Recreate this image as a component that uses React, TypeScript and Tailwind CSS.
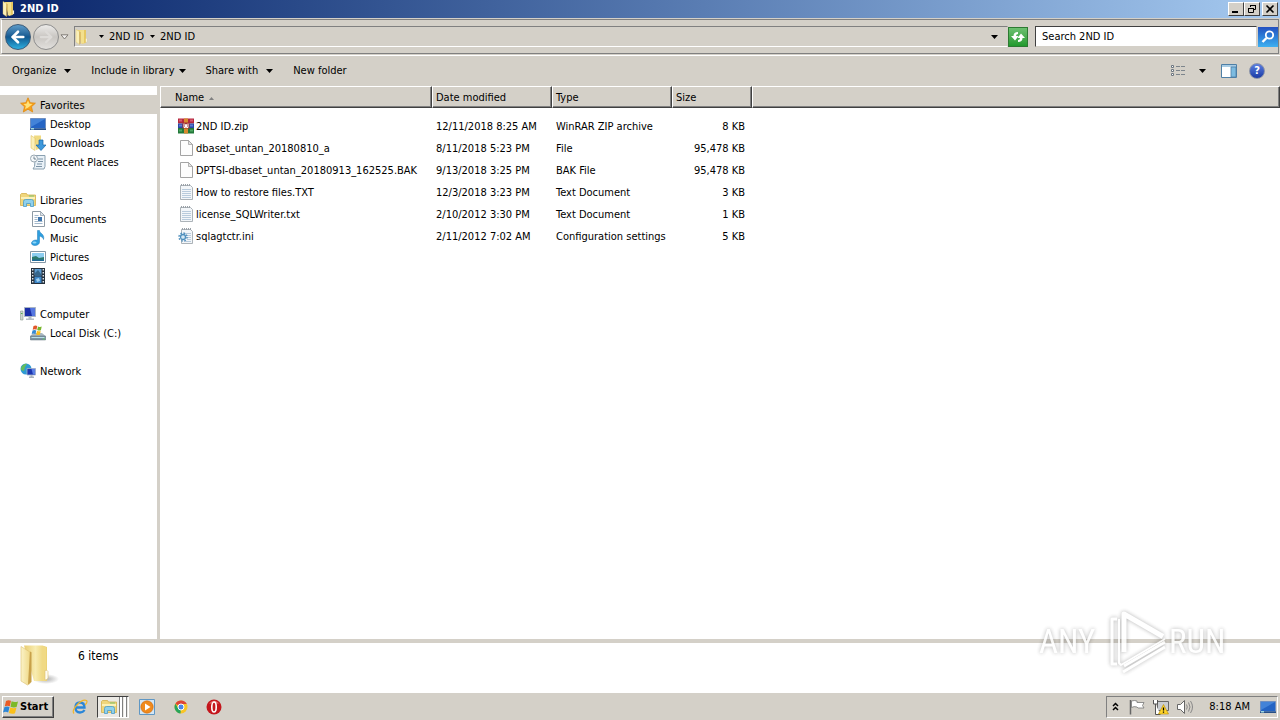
import type { ReactNode } from 'react';
import { ArrowLeft, ArrowRight } from 'lucide-react';

type IconProps = { className?: string };

/* ---------- icons ---------- */

function FolderIcon({ className = 'size-4' }: IconProps) {
  return (
    <svg viewBox="0 0 16 16" className={className} aria-hidden="true">
      <path d="M2.500 1h8v13L7 15z" fill="#efd677" />
      <path d="M5 1.500l6-.8v12.600l-5 1.200z" fill="#f3e08e" />
      <path d="M9 1h2v12.500l-2 .5z" fill="#e6c862" />
      <path d="M1 .5l3.500 2V15.500L1 13z" fill="#fbf0b8" stroke="#dfc268" strokeWidth="0.4" />
      <path d="M4.500 2.500l1 .6v11.500l-1 .9z" fill="#c9a24a" />
      <path d="M10.800 9.500h1.200v3.500h-1.200z" fill="#fffdf0" stroke="#dcc06a" strokeWidth="0.2" />
    </svg>
  );
}

function LargeFolderIcon() {
  return (
    <svg viewBox="0 0 40 44" className="h-11 w-10" aria-hidden="true">
      <defs>
        <linearGradient id="folder-back" x1="0" x2="1">
          <stop offset="0" stopColor="#e9cd72" />
          <stop offset="0.5" stopColor="#f8ecb0" />
          <stop offset="1" stopColor="#e8cb66" />
        </linearGradient>
        <linearGradient id="folder-front" x1="0" x2="1">
          <stop offset="0" stopColor="#fbf3c8" />
          <stop offset="1" stopColor="#efd988" />
        </linearGradient>
        <radialGradient id="folder-shadow">
          <stop offset="0" stopColor="#8c8c8c" stopOpacity="0.7" />
          <stop offset="1" stopColor="#8c8c8c" stopOpacity="0" />
        </radialGradient>
      </defs>
      <ellipse cx="26" cy="36" rx="13" ry="5" fill="url(#folder-shadow)" />
      <path d="M4 2.500h18.500l4.500 1.500V38H14z" fill="url(#folder-back)" />
      <path d="M22 3l4.500 1.200V38H22z" fill="#f0d984" />
      <path d="M1 3.500L10 9v31.500L7.500 42 1 38z" fill="url(#folder-front)" stroke="#dcc070" strokeWidth="0.6" />
      <path d="M10 8.500l1.500.8V39L8 41.500z" fill="#c8a14a" />
      <path d="M25 27.500q2.500-1 3 1V35q-.5 2-3 2z" fill="#fffdf2" stroke="#dcc070" strokeWidth="0.6" />
    </svg>
  );
}

function StarIcon() {
  return (
    <svg viewBox="0 0 16 16" className="size-4" aria-hidden="true">
      <path d="M8 .8l2.200 4.900 5.200.5-3.900 3.500 1.200 5.300L8 12.200 3.300 15l1.200-5.300L.6 6.200l5.200-.5z" fill="#f9a11b" stroke="#e08a10" strokeWidth="0.8" />
      <path d="M8 3.500l1.400 3.300 3 .3-2.300 2L8 10.800 5 12l.9-3L3.500 7l3-.3z" fill="#ffe27a" />
    </svg>
  );
}

function DesktopIcon() {
  return (
    <svg viewBox="0 0 16 16" className="size-4" aria-hidden="true">
      <path d="M.5 2.500h15v10H.5z" fill="#2464c4" stroke="#6f8fc0" />
      <path d="M1 3h14L1 11z" fill="#4383d8" />
      <path d="M0 12.500h16v1.500H0z" fill="#274f86" />
      <path d="M1 12h3v1.500H1z" fill="#9fd8e0" />
    </svg>
  );
}

function DownloadsIcon() {
  return (
    <svg viewBox="0 0 16 16" className="size-4" aria-hidden="true">
      <path d="M4 .5h7v12.500l-5 2z" fill="#f0da80" />
      <path d="M1 .5L5 3V15.500L1 13z" fill="#fbf0b8" stroke="#d8b650" strokeWidth="0.5" />
      <path d="M9 5h4v5h3l-5 5.500L6 10h3z" fill="#3d98dc" stroke="#1764a8" strokeWidth="0.7" />
    </svg>
  );
}

function RecentIcon() {
  return (
    <svg viewBox="0 0 16 16" className="size-4" aria-hidden="true">
      <path d="M5.500 1.500h9.500v11l-1 2.500H3l1.500-2.500z" fill="#e9f1f7" stroke="#8aa0b0" />
      <path d="M8 5h5M8 7.500h5M7 10h5M6 12.500h6" stroke="#7c93a6" />
      <circle cx="4" cy="4.500" r="3.500" fill="#f5f8fa" stroke="#9aa8b2" />
      <path d="M4 2.500v2.500h2" stroke="#52677a" strokeWidth="0.8" fill="none" />
    </svg>
  );
}

function LibraryIcon({ className = 'size-4' }: IconProps) {
  return (
    <svg viewBox="0 0 16 16" className={className} aria-hidden="true">
      <path d="M.5 13.500V2.500L1.500 1.500h5l1 1.500h8v10.500z" fill="#f0d67c" stroke="#d3b04c" strokeWidth="0.8" />
      <path d="M1 5h14v2H1z" fill="#fbf0b8" />
      <path d="M9 3.500h5v1H9z" fill="#7cc576" />
      <path d="M3.500 14.500V9.500q0-2 2-2h6q2 0 2 2v5h-3v-3h-4v3z" fill="#8fd0ec" stroke="#4a9cc8" strokeWidth="0.8" />
    </svg>
  );
}

function DocumentsIcon() {
  return (
    <svg viewBox="0 0 16 16" className="size-4" aria-hidden="true">
      <path d="M2.500.5h8l4 4v11h-12z" fill="#fff" stroke="#8e9aa5" />
      <path d="M10.500.5v4h4z" fill="#dbe3ea" stroke="#8e9aa5" strokeWidth="0.7" />
      <path d="M4.500 4.500h4M4.500 6.500h3M4.500 8.500h3M4.500 10.500h8M4.500 12.500h8" stroke="#8ca6bf" strokeWidth="0.8" />
      <path d="M8 6h4v4H8z" fill="#3d74ad" />
    </svg>
  );
}

function MusicIcon() {
  return (
    <svg viewBox="0 0 16 16" className="size-4" aria-hidden="true">
      <path d="M7.500.5h2c0 3 5.500 3.500 4 9-.4-2-2-3-4-3.500V12c0 2-2 3.500-4.500 3.500S1.500 14.500 1.500 13s2-3 4.500-3q1 0 1.500.3z" fill="#2e9fdf" stroke="#1c78b8" strokeWidth="0.5" />
      <ellipse cx="4.500" cy="12.500" rx="2" ry="1" fill="#8fd6f8" />
    </svg>
  );
}

function PicturesIcon() {
  return (
    <svg viewBox="0 0 16 16" className="size-4" aria-hidden="true">
      <path d="M.5 2.500h15v11H.5z" fill="#fff" stroke="#8497a6" />
      <path d="M2 4h12v8H2z" fill="#8ccdf0" />
      <path d="M2 8l4-1 3 2 5-1v4H2z" fill="#2b7a6e" />
      <path d="M2 10.500h12V12H2z" fill="#1e6a98" />
    </svg>
  );
}

function VideosIcon() {
  return (
    <svg viewBox="0 0 16 16" className="size-4" aria-hidden="true">
      <path d="M1 0h14v16H1z" fill="#25303c" />
      <path d="M4.500 1h7v6.500h-7z" fill="#5b9bd0" />
      <path d="M4.500 8.500h7V15h-7z" fill="#3c86c8" />
      <path d="M5 5l3-3 3 4v1.500H5z" fill="#35668c" />
      <path d="M6 11l3-1 1 3-3 1z" fill="#9fd0f0" />
      <path d="M2.700 1v15M13.300 1v15" stroke="#dfe6ec" strokeWidth="1.400" strokeDasharray="1.500 1.500" />
    </svg>
  );
}

function ComputerIcon() {
  return (
    <svg viewBox="0 0 16 16" className="size-4" aria-hidden="true">
      <path d="M.5 5h2.500v9H.5z" fill="#cdd6cf" stroke="#8d9a90" strokeWidth="0.6" />
      <path d="M4.500 1.500h11v9h-11z" fill="#1c2fa8" stroke="#a8b4c4" />
      <path d="M10 2h5v8l-3 0z" fill="#5577e0" />
      <path d="M8.500 11h3v1.500H14V14H6v-1.500h2.500z" fill="#b5bec6" />
      <path d="M1 7.500h1.500" stroke="#4fae4f" />
    </svg>
  );
}

function WindowsFlag({ className = 'size-4' }: IconProps) {
  return (
    <svg viewBox="0 0 16 16" className={className} aria-hidden="true">
      <path d="M3 2Q5.500.5 8 1.800L6.800 7.300Q4.500 6 1.800 7.300z" fill="#ea5b25" />
      <path d="M8.600 2.200q2.900 1.400 6.400.2L13.600 8q-3 1-6.100-.3z" fill="#7db928" />
      <path d="M1.500 8.100q2.600-1.200 5 0l-1.300 5.400Q2.800 12.200 0 13.500z" fill="#2c86d6" />
      <path d="M7.300 8.500q2.900 1.300 6.100.3l-1.400 5.500q-3 1.200-6.100-.3z" fill="#fbc01a" />
    </svg>
  );
}

function LocalDiskIcon() {
  return (
    <svg viewBox="0 0 16 16" className="size-4" aria-hidden="true">
      <path d="M1 10l3-2h8l3.500 3v4H.5v-4z" fill="#a9b8c2" />
      <path d="M.5 11h15v4H.5z" fill="#7b93a2" stroke="#60737f" strokeWidth="0.5" />
      <path d="M1.500 12h13v1h-13z" fill="#b9dfe8" />
      <path d="M3.500 1Q5.500 0 7.300 1L6.500 4.700Q4.700 4 2.700 4.800z" fill="#e2572a" />
      <path d="M8 1.400q1.800.9 3.700.2L10.900 5.300Q9 6 7.200 5.100z" fill="#78b62c" />
      <path d="M2.500 5.400q2-.9 3.800 0L5.500 9Q3.700 8.200 1.700 9z" fill="#3489d4" />
      <path d="M7 5.800q1.900.9 3.700.2L9.900 9.700Q8 10.400 6.200 9.500z" fill="#f9bd1f" />
      <path d="M13 13.500h1.500v1H13z" fill="#56d656" />
    </svg>
  );
}

function NetworkIcon() {
  return (
    <svg viewBox="0 0 16 16" className="size-4" aria-hidden="true">
      <circle cx="6" cy="6" r="5.500" fill="#2e9ad4" />
      <path d="M2 3q3-3 5-2L5 4 4 8 1 7q-.5-2 1-4zM7 6l3-1 1 3-3 3z" fill="#63bd5d" />
      <path d="M7 5.500h8.500v6.500H7z" fill="#1b35b0" stroke="#a5b4cc" strokeWidth="0.8" />
      <path d="M11.500 6H15v5.500h-2z" fill="#5b80e6" />
      <path d="M10.500 12.300h2v1.200h1.500v1.500H9v-1.500h1.500z" fill="#aab3bc" />
    </svg>
  );
}

function ZipIcon() {
  return (
    <svg viewBox="0 0 16 16" className="size-4" aria-hidden="true">
      <path d="M0 .5h16v5H0z" fill="#b5263c" />
      <path d="M0 5.500h16V10H0z" fill="#2747a5" />
      <path d="M0 10h16v5.500H0z" fill="#23793a" />
      <path d="M1 1.500h3v2H1zM12 1.500h3v2h-3z" fill="#d85a72" />
      <path d="M1 6.500h3v2H1zM12 6.500h3v2h-3z" fill="#5c7bd0" />
      <path d="M1 11.500h3v2H1zM12 11.500h3v2h-3z" fill="#4fa862" />
      <path d="M6 .5h4v15H6z" fill="#d88a2e" />
      <path d="M4.500 4.500h7v6h-7z" fill="#a03030" />
      <path d="M6 5.500v4h1.500V6.500h1v3H10v-4" stroke="#fff" fill="none" />
    </svg>
  );
}

function FileIcon() {
  return (
    <svg viewBox="0 0 16 16" className="size-4" aria-hidden="true">
      <path d="M2.500.5h8l4 4v11h-12z" fill="#fdfdfd" stroke="#9a9a9a" strokeWidth="0.9" />
      <path d="M10.500.5v4h4z" fill="#e4e4e4" stroke="#9a9a9a" strokeWidth="0.7" />
    </svg>
  );
}

function TextIcon() {
  return (
    <svg viewBox="0 0 16 16" className="size-4" aria-hidden="true">
      <path d="M2.500 1.500h10l2 2v12h-12z" fill="#f3f6f9" stroke="#a3aab0" strokeWidth="0.9" />
      <path d="M4 5.500h9M4 7.500h9M4 9.500h9M4 11.500h9M4 13.500h9" stroke="#a9c0d4" strokeWidth="0.8" />
      <path d="M3 1h10" stroke="#9aa1a8" strokeWidth="2" strokeDasharray="1 1" />
    </svg>
  );
}

function ConfigIcon() {
  return (
    <svg viewBox="0 0 16 16" className="size-4" aria-hidden="true">
      <path d="M3.500 1.500h9l2 2v12h-11z" fill="#f3f6f9" stroke="#a3aab0" strokeWidth="0.9" />
      <path d="M6 5.500h7M9 7.500h4M9 9.500h4M9 11.500h4M6 13.500h7" stroke="#a9c0d4" strokeWidth="0.8" />
      <path d="M4 1h9" stroke="#9aa1a8" strokeWidth="2" strokeDasharray="1 1" />
      <circle cx="5" cy="9" r="4" fill="none" stroke="#4f8fbd" strokeWidth="1.400" strokeDasharray="1.600 1.540" />
      <circle cx="5" cy="9" r="2.500" fill="#d6e9f5" stroke="#4f8fbd" strokeWidth="1.300" />
    </svg>
  );
}

function Caret({ className = 'w-[7px] h-1' }: IconProps) {
  return (
    <svg viewBox="0 0 7 4" className={className} aria-hidden="true">
      <path d="M0 0h7L3.500 4z" fill="currentColor" />
    </svg>
  );
}

/* ---------- data ---------- */

type NavItem = { label: string; icon: ReactNode };
type NavGroup = NavItem & { active?: boolean; items: NavItem[] };

const navGroups: NavGroup[] = [
  {
    label: 'Favorites',
    icon: <StarIcon />,
    active: true,
    items: [
      { label: 'Desktop', icon: <DesktopIcon /> },
      { label: 'Downloads', icon: <DownloadsIcon /> },
      { label: 'Recent Places', icon: <RecentIcon /> },
    ],
  },
  {
    label: 'Libraries',
    icon: <LibraryIcon />,
    items: [
      { label: 'Documents', icon: <DocumentsIcon /> },
      { label: 'Music', icon: <MusicIcon /> },
      { label: 'Pictures', icon: <PicturesIcon /> },
      { label: 'Videos', icon: <VideosIcon /> },
    ],
  },
  {
    label: 'Computer',
    icon: <ComputerIcon />,
    items: [{ label: 'Local Disk (C:)', icon: <LocalDiskIcon /> }],
  },
  { label: 'Network', icon: <NetworkIcon />, items: [] },
];

const files = [
  { name: '2ND ID.zip', date: '12/11/2018 8:25 AM', type: 'WinRAR ZIP archive', size: '8 KB', icon: <ZipIcon /> },
  { name: 'dbaset_untan_20180810_a', date: '8/11/2018 5:23 PM', type: 'File', size: '95,478 KB', icon: <FileIcon /> },
  { name: 'DPTSI-dbaset_untan_20180913_162525.BAK', date: '9/13/2018 3:25 PM', type: 'BAK File', size: '95,478 KB', icon: <FileIcon /> },
  { name: 'How to restore files.TXT', date: '12/3/2018 3:23 PM', type: 'Text Document', size: '3 KB', icon: <TextIcon /> },
  { name: 'license_SQLWriter.txt', date: '2/10/2012 3:30 PM', type: 'Text Document', size: '1 KB', icon: <TextIcon /> },
  { name: 'sqlagtctr.ini', date: '2/11/2012 7:02 AM', type: 'Configuration settings', size: '5 KB', icon: <ConfigIcon /> },
];

/* ---------- window parts ---------- */

function TitleButton({ label, children }: { label: string; children: ReactNode }) {
  return (
    <button
      type="button"
      aria-label={label}
      className="flex h-[14px] w-4 items-center justify-center border border-t-white border-l-white border-r-[#404040] border-b-[#404040] bg-[#d4d0c8]"
    >
      <svg viewBox="0 0 10 10" className="size-[10px]" fill="none" stroke="#000">
        {children}
      </svg>
    </button>
  );
}

function TitleBar() {
  return (
    <header className="flex h-[18px] items-center bg-linear-to-r from-[#0a246a] to-[#a6caf0] pr-[2px] pl-[2px]">
      <FolderIcon />
      <h1 className="ml-[2px] flex-1 font-bold text-white">2ND ID</h1>
      <TitleButton label="Minimize">
        <path d="M1 8h6" strokeWidth="2" />
      </TitleButton>
      <TitleButton label="Restore">
        <path d="M3.500 3V1.500h5v4H7M3 1.500h6M1.500 4.500h5v4h-5zM1 4.500h6" />
      </TitleButton>
      <span className="w-[2px]" />
      <TitleButton label="Close">
        <path d="M1.500 1.500l7 7M8.500 1.500l-7 7" strokeWidth="1.600" />
      </TitleButton>
    </header>
  );
}

function AddressBar() {
  return (
    <div className="m-px flex h-[35px] items-center border border-[#808080] border-l-white pl-[3px]">
      <button type="button" aria-label="Back" className="flex size-[26px] items-center justify-center rounded-full border border-[#3b5a78] bg-linear-to-b from-[#5d9cc9] via-[#12588f] to-[#2fb0e0] text-white">
        <ArrowLeft size={18} strokeWidth={3.5} />
      </button>
      <button type="button" aria-label="Forward" className="ml-[2px] flex size-[26px] items-center justify-center rounded-full border border-[#8d8d8d] bg-linear-to-b from-[#ecebe9] via-[#c9c6c2] to-[#e2e0dd] text-[#dddbd8]">
        <ArrowRight size={18} strokeWidth={3} />
      </button>
      <button type="button" aria-label="Recent locations" className="ml-px">
        <svg viewBox="0 0 9 6" className="h-[6px] w-[9px]">
          <path d="M1 .8h7L4.500 5z" fill="#f2f0ee" stroke="#77736c" strokeWidth="0.9" />
        </svg>
      </button>
      <nav aria-label="Address" className="ml-[5px] flex h-[21px] flex-1 items-center border border-t-[#808080] border-l-[#808080] border-r-[#d4d0c8] border-b-white">
        <FolderIcon />
        <Caret className="ml-2 h-[3px] w-[5px]" />
        <a href="#parent" className="ml-[5px]">2ND ID</a>
        <Caret className="ml-[6px] h-[3px] w-[5px]" />
        <a href="#current" className="ml-[5px]">2ND ID</a>
        <button type="button" aria-label="Previous locations" className="mr-[9px] ml-auto">
          <Caret />
        </button>
      </nav>
      <button type="button" aria-label="Refresh" className="mr-[2px] flex size-5 items-center justify-center border border-[#2d7a32] bg-linear-to-b from-[#6cc070] to-[#1f9a2c]">
        <svg viewBox="0 0 18 18" className="size-[18px]">
          <path d="M9 4Q4.500 4 4.500 8H2l4 4.500L9.500 8H7q0-2 2-2z" fill="#fff" />
          <path d="M9 14q4.500 0 4.500-4H16l-4-4.500L8.500 10H11q0 2-2 2z" fill="#fff" />
        </svg>
      </button>
      <input
        type="text"
        aria-label="Search 2ND ID"
        placeholder="Search 2ND ID"
        className="ml-[5px] h-[21px] w-[222px] border border-t-[#404040] border-l-[#404040] border-r-[#d4d0c8] border-b-[#d4d0c8] bg-white px-[6px] placeholder:text-black placeholder:opacity-100"
      />
      <button type="button" aria-label="Search" className="ml-px flex size-5 items-center justify-center bg-linear-to-b from-[#2450c0] to-[#3fb0f0]">
        <svg viewBox="0 0 16 16" className="size-4" fill="none" stroke="#fff">
          <circle cx="9.500" cy="6" r="3.700" strokeWidth="1.800" />
          <path d="M6.500 9l-4 4" strokeWidth="2.400" />
        </svg>
      </button>
    </div>
  );
}

function Toolbar() {
  return (
    <div className="flex h-[31px] items-center border-t border-white pr-[15px] pb-px pl-3">
      <button type="button" className="flex items-center gap-2">
        Organize <Caret />
      </button>
      <button type="button" className="ml-5 flex items-center gap-1">
        Include in library <Caret />
      </button>
      <button type="button" className="ml-5 flex items-center gap-2">
        Share with <Caret />
      </button>
      <button type="button" className="ml-5">New folder</button>
      <button type="button" aria-label="Change view" className="ml-auto">
        <svg viewBox="0 0 16 14" className="h-[14px] w-4" fill="none">
          <path d="M1.500 1.500h2v2h-2zM1.500 5.500h2v2h-2zM1.500 9.500h2v2h-2z" stroke="#6c7680" fill="#fff" />
          <path d="M6 2.500h4M11 2.500h4M6 6.500h4M11 6.500h4M6 10.500h4M11 10.500h4" stroke="#7d858c" />
        </svg>
      </button>
      <button type="button" aria-label="More view options" className="ml-[13px]">
        <Caret />
      </button>
      <button type="button" aria-label="Preview pane" className="ml-[15px]">
        <svg viewBox="0 0 16 14" className="h-[14px] w-4">
          <path d="M.5.5h15v13H.5z" fill="#fff" stroke="#4e7fa6" />
          <path d="M1 1h14v2H1z" fill="#a8cce4" />
          <path d="M10 3h5v10h-5z" fill="#7cbbe0" stroke="#4e7fa6" strokeWidth="0.8" />
        </svg>
      </button>
      <button type="button" aria-label="Help" className="ml-3 flex size-4 items-center justify-center rounded-full border border-[#8a93a8] bg-linear-to-b from-[#5c7ee0] to-[#1b3aa5] font-bold text-white">
        ?
      </button>
    </div>
  );
}

function Sidebar() {
  return (
    <nav aria-label="Folders" className="w-[160px] shrink-0 border-r-[3px] border-[#d4d0c8] bg-white pt-[9px]">
      {navGroups.map((group) => (
        <ul key={group.label} className="mb-[19px]">
          <li>
            <a
              href={`#${group.label}`}
              className={group.active ? 'flex h-[19px] items-center gap-1 bg-[#d4d0c8] pl-5' : 'flex h-[19px] items-center gap-1 pl-5'}
            >
              {group.icon}
              <span className="pt-[2px]">{group.label}</span>
            </a>
          </li>
          {group.items.map((item) => (
            <li key={item.label}>
              <a href={`#${item.label}`} className="flex h-[19px] items-center gap-1 pl-[30px]">
                {item.icon}
                <span className="pt-[2px]">{item.label}</span>
              </a>
            </li>
          ))}
        </ul>
      ))}
    </nav>
  );
}

const headCell =
  'h-[22px] border border-t-white border-l-white border-r-[#404040] border-b-[#404040] bg-[#d4d0c8] px-[3px] pt-[2px] pb-0 text-left font-normal shadow-[inset_-1px_-1px_0_#808080]';

function FileTable() {
  return (
    <main className="flex-1 bg-white">
      <table className="w-full table-fixed border-separate border-spacing-0">
        <colgroup>
          <col className="w-[272px]" />
          <col className="w-[120px]" />
          <col className="w-[120px]" />
          <col className="w-[80px]" />
          <col />
        </colgroup>
        <thead>
          <tr>
            <th scope="col" className={headCell}>
              <span className="flex items-center gap-[5px] pl-[11px]">
                Name
                <svg viewBox="0 0 5 3" className="h-[3px] w-[5px] text-[#808080]" aria-hidden="true">
                  <path d="M0 3h5L2.500 0z" fill="currentColor" />
                </svg>
              </span>
            </th>
            <th scope="col" className={headCell}>Date modified</th>
            <th scope="col" className={headCell}>Type</th>
            <th scope="col" className={headCell}>Size</th>
            <td className={headCell} />
          </tr>
        </thead>
        <tbody className="before:block before:h-[7px]">
          {files.map((file) => (
            <tr key={file.name} className="h-[22px] whitespace-nowrap">
              <td className="p-0">
                <span className="flex items-center gap-[2px] pl-[18px]">
                  {file.icon}
                  <span className="pt-[2px]">{file.name}</span>
                </span>
              </td>
              <td className="px-1 pt-[2px] pb-0">{file.date}</td>
              <td className="px-1 pt-[2px] pb-0">{file.type}</td>
              <td className="px-[7px] pt-[2px] pb-0 text-right">{file.size}</td>
              <td />
            </tr>
          ))}
        </tbody>
      </table>
    </main>
  );
}

function Watermark() {
  return (
    <svg
      viewBox="0 0 200 70"
      className="pointer-events-none absolute right-[44px] bottom-[44px] h-[70px] w-[200px] opacity-85 drop-shadow-[0_0_2px_rgba(0,0,0,0.35)]"
      aria-label="ANY RUN"
    >
      <g fill="#fff" fontFamily="'Liberation Sans Narrow', 'Roboto Condensed', 'Open Sans Condensed', Roboto, sans-serif" fontSize="33">
        <text x="3" y="47">ANY</text>
        <text x="133" y="47">RUN</text>
      </g>
      <g fill="none" stroke="#fff" strokeLinejoin="round">
        <path d="M88 46V8l39 22.500" strokeWidth="5" />
        <path d="M81 13h-5v45h5" strokeWidth="3" />
        <path d="M83 13v44l2 2 44-26" strokeWidth="2" />
        <path d="M87 66l42-25M88 60l41-24" strokeWidth="3" />
      </g>
    </svg>
  );
}

function DetailsPane() {
  return (
    <footer className="flex h-[53px] items-start border-t-4 border-[#d4d0c8] bg-white pl-5">
      <LargeFolderIcon />
      <p className="ml-[18px] pt-[5px] text-xs">6 items</p>
    </footer>
  );
}

function Taskbar() {
  return (
    <div className="flex h-[28px] items-center border-t border-white bg-[#d4d0c8] pr-[2px] pl-[2px]">
      <button type="button" className="flex h-[22px] w-[52px] items-center gap-px border border-t-white border-l-white border-r-[#404040] border-b-[#404040] font-bold shadow-[inset_-1px_-1px_0_#808080]">
        <WindowsFlag />
        Start
      </button>
      <button type="button" aria-label="Internet Explorer" className="ml-[18px]">
        <svg viewBox="0 0 16 16" className="size-4" fill="none">
          <path d="M12.500 11Q11 13.500 8 13.500q-4.500 0-4.500-5T8 3.500q4.500 0 4.500 5H4" stroke="#2a86d8" strokeWidth="2.300" />
          <path d="M2 14.500Q-.5 12 5 6T14.500 1.500Q16 3 13 6" stroke="#f0b528" strokeWidth="1.200" />
        </svg>
      </button>
      <button type="button" aria-label="Windows Explorer" className="ml-[9px] flex h-[22px] w-[32px] items-center border border-t-[#404040] border-l-[#404040] border-r-white border-b-white bg-[#ebe9e4] pl-[3px]">
        <LibraryIcon />
        <span className="ml-[2px] h-5 w-1 border-x border-[#808080] bg-white" />
        <span className="ml-px h-5 w-[3px] border-r border-[#808080] bg-white" />
      </button>
      <button type="button" aria-label="Media Player" className="ml-[10px]">
        <svg viewBox="0 0 16 16" className="size-4">
          <path d="M.5.5h15v15H.5z" fill="#d3e6f5" stroke="#5f97c4" />
          <circle cx="8" cy="8" r="6.200" fill="#f08a1d" stroke="#c9670c" strokeWidth="0.600" />
          <path d="M6 4.500v7L11.500 8z" fill="#fff" />
        </svg>
      </button>
      <button type="button" aria-label="Chrome" className="ml-[18px]">
        <svg viewBox="0 0 16 16" className="size-4">
          <circle cx="8" cy="8" r="6.500" fill="#f9c526" />
          <path d="M8 8L2.400 4.700A6.500 6.500 0 0 1 13.800 5H8z" fill="#dd4437" />
          <path d="M8 8l-.5 6.500A6.500 6.500 0 0 1 2.400 4.700L5.400 9.500z" fill="#27a45b" />
          <circle cx="8" cy="8" r="3" fill="#4a86e8" stroke="#fff" />
        </svg>
      </button>
      <button type="button" aria-label="Opera" className="ml-[17px]">
        <svg viewBox="0 0 16 16" className="size-4">
          <circle cx="8" cy="8" r="7.500" fill="#c4161c" />
          <path d="M3 4.500Q8-1 13 4.500z" fill="#e8696c" />
          <ellipse cx="8" cy="8" rx="2.200" ry="5" fill="#c4161c" stroke="#fff" strokeWidth="1.600" />
        </svg>
      </button>
      <div className="ml-auto flex h-[22px] items-center border border-t-[#808080] border-l-[#808080] border-r-white border-b-white pr-px pl-[5px]">
        <button type="button" aria-label="Show hidden icons">
          <svg viewBox="0 0 7 9" className="h-[9px] w-[7px]" fill="none" stroke="#000" strokeWidth="1.500">
            <path d="M1 4l2.500-2.500L6 4M1 8l2.500-2.500L6 8" />
          </svg>
        </button>
        <svg viewBox="0 0 16 16" className="ml-[10px] size-4" aria-hidden="true">
          <path d="M1.500 1v14.500" stroke="#666" strokeWidth="1.500" />
          <path d="M2.500 2q3-1 5.500 0v1.500h7l-1.500 3L15 9H9L8 8Q5 7 2.500 8.500z" fill="#fff" stroke="#777" strokeWidth="0.800" />
        </svg>
        <svg viewBox="0 0 16 16" className="ml-2 size-4" aria-hidden="true">
          <path d="M4.500 2.500h11v9h-11z" fill="#c9ccd0" stroke="#666" />
          <path d="M.5 1v4h4V1M2.500 5v10.500h5" fill="#fff" stroke="#555" />
          <path d="M10.500 5.500l5 9.500h-10z" fill="#ffd42a" stroke="#b58a00" strokeWidth="0.600" />
          <path d="M10.500 8.500v3M10.500 12.500v1.300" stroke="#000" strokeWidth="1.300" />
        </svg>
        <svg viewBox="0 0 16 16" className="ml-2 size-4" fill="none" aria-hidden="true">
          <path d="M.5 5.500h3l4-4v13l-4-4h-3z" fill="#fff" stroke="#666" />
          <path d="M9.500 5.500q1.500 2.500 0 5M11.500 3.500q3 4.500 0 9M13.500 2q4 6 0 12" stroke="#888" />
        </svg>
        <time className="ml-4">8:18 AM</time>
        <button type="button" aria-label="Show desktop" className="ml-[10px]">
          <DesktopIcon />
        </button>
      </div>
    </div>
  );
}

export default function App() {
  return (
    <div className="relative flex min-h-screen flex-col bg-[#d4d0c8] font-['DejaVu_Sans_Condensed','Liberation_Sans',sans-serif] text-[11px] leading-[14px] text-black">
      <TitleBar />
      <AddressBar />
      <Toolbar />
      <div className="flex flex-1">
        <Sidebar />
        <FileTable />
      </div>
      <DetailsPane />
      <Taskbar />
      <Watermark />
    </div>
  );
}
